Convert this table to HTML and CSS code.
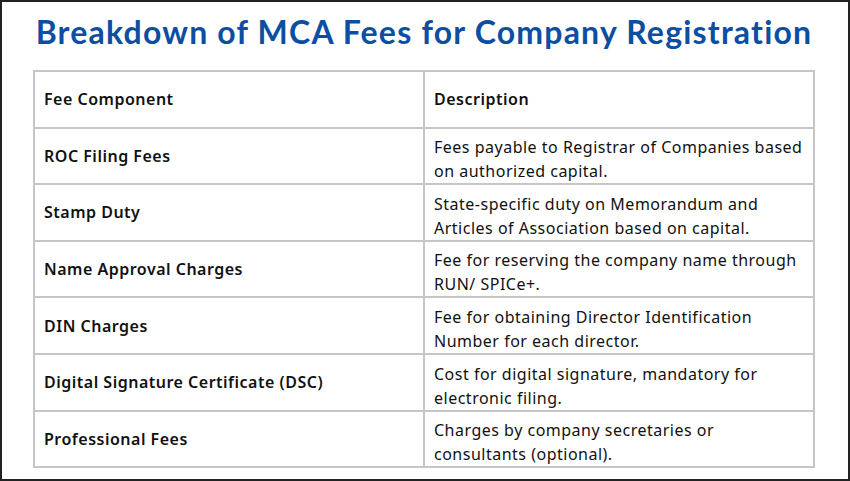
FILE: index.html
```html
<!DOCTYPE html>
<html>
<head>
<meta charset="utf-8">
<link rel="stylesheet" href="styles.css">
</head>
<body>
<div class="frame">
  <h1 class="title">Breakdown of MCA Fees for Company Registration</h1>
  <table class="fees">
    <tr><th>Fee Component</th><th>Description</th></tr>
    <tr><td class="name">ROC Filing Fees</td><td class="desc">Fees payable to Registrar of Companies based on authorized capital.</td></tr>
    <tr><td class="name">Stamp Duty</td><td class="desc">State-specific duty on Memorandum and Articles of Association based on capital.</td></tr>
    <tr><td class="name">Name Approval Charges</td><td class="desc">Fee for reserving the company name through RUN/ SPICe+.</td></tr>
    <tr><td class="name">DIN Charges</td><td class="desc">Fee for obtaining Director Identification Number for each director.</td></tr>
    <tr><td class="name">Digital Signature Certificate (DSC)</td><td class="desc">Cost for digital signature, mandatory for electronic filing.</td></tr>
    <tr><td class="name">Professional Fees</td><td class="desc">Charges by company secretaries or consultants (optional).</td></tr>
  </table>
</div>
</body>
</html>
```
FILE: styles.css
```css
html, body {
  margin: 0;
  padding: 0;
  background: #ffffff;
}
.frame {
  box-sizing: border-box;
  width: 850px;
  height: 481px;
  border: 2px solid #222222;
  padding: 0 0 0 31px;
  overflow: hidden;
}
.title {
  margin: 10px 0 0 0;
  padding-right: 33px;
  text-align: center;
  font-family: "Lato", sans-serif;
  font-weight: 700;
  font-size: 32px;
  letter-spacing: 1.2px;
  line-height: 40px;
  color: #0b4ea2;
}
.fees {
  margin-top: 18px;
  width: 782px;
  border-collapse: collapse;
  table-layout: fixed;
  font-family: "Noto Sans", sans-serif;
  font-size: 16px;
  line-height: 24px;
  letter-spacing: 0.5px;
  color: #111111;
}
.fees tr {
  height: 56.6px;
}
.fees th, .fees td {
  border: 2px solid #c6c6c6;
  padding: 2px 6px 2px 9px;
  text-align: left;
  vertical-align: middle;
  width: 50%;
}
.fees td.desc {
  vertical-align: bottom;
  padding-bottom: 0;
}
.fees th, .fees td.name {
  font-weight: 600;
}
```
